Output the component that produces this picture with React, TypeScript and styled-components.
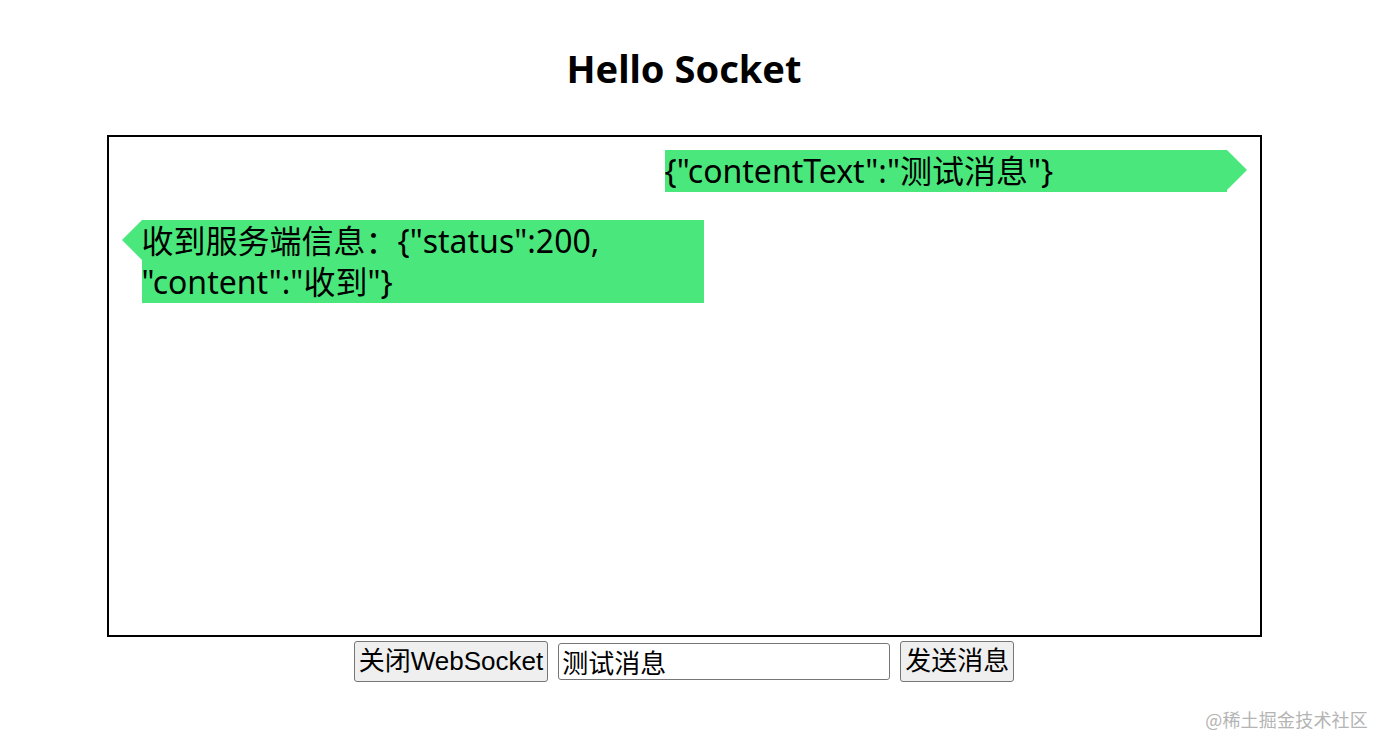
import React, { useState } from 'react';
import styled, { createGlobalStyle } from 'styled-components';

const GlobalStyle = createGlobalStyle`
  html, body {
    margin: 0;
    padding: 0;
    background: #ffffff;
  }
  body {
    font-family: "Noto Sans", "Noto Sans CJK SC", sans-serif;
    color: #000;
  }
`;

const BUBBLE_GREEN = '#4ae87c';

const Page = styled.div`
  width: 1368px;
  min-height: 752px;
  padding-top: 44px;
  box-sizing: border-box;
`;

const Title = styled.h1`
  margin: 0 0 43px;
  text-align: center;
  font-size: 38px;
  line-height: 48px;
  font-weight: 700;
`;

const Board = styled.div`
  width: 1155px;
  height: 502px;
  margin: 0 auto;
  border: 2px solid #000;
  box-sizing: border-box;
  padding: 13px 33px;
  display: flex;
  flex-direction: column;
  gap: 28px;
`;

const Bubble = styled.div<{ $side: 'left' | 'right' }>`
  position: relative;
  width: 562px;
  align-self: ${p => (p.$side === 'right' ? 'flex-end' : 'flex-start')};
  background: ${BUBBLE_GREEN};
  font-size: 32px;
  line-height: 41.5px;
  word-break: break-word;

  &::after {
    content: '';
    position: absolute;
    top: 0;
    ${p => (p.$side === 'right' ? 'left: 100%;' : 'right: 100%;')}
    border-top: 20px solid transparent;
    border-bottom: 20px solid transparent;
    ${p =>
      p.$side === 'right'
        ? `border-left: 20px solid ${BUBBLE_GREEN};`
        : `border-right: 20px solid ${BUBBLE_GREEN};`}
  }
`;

const Controls = styled.div`
  display: flex;
  justify-content: center;
  align-items: center;
  gap: 10px;
  margin-top: 4px;
`;

const Button = styled.button`
  font-family: "Liberation Sans", "Noto Sans CJK SC", sans-serif;
  font-size: 26px;
  line-height: 37px;
  height: 41px;
  padding: 0 4px;
  background: #efefef;
  color: #000;
  border: 1px solid #767676;
  border-radius: 3px;
  cursor: pointer;
`;

const MessageInput = styled.input`
  font-family: "Liberation Sans", "Noto Sans CJK SC", sans-serif;
  font-size: 26px;
  width: 332px;
  height: 37px;
  box-sizing: border-box;
  padding: 0 3px;
  border: 1px solid #767676;
  border-radius: 3px;
  color: #000;
`;

const Watermark = styled.div`
  position: absolute;
  right: 22px;
  bottom: 20px;
  font-family: "Noto Sans CJK SC", sans-serif;
  font-size: 18px;
  color: #b4b4b4;
  letter-spacing: 0.2px;
`;

type Message = { id: number; side: 'left' | 'right'; text: string };

const initialMessages: Message[] = [
  { id: 1, side: 'right', text: '{"contentText":"测试消息"}' },
  { id: 2, side: 'left', text: '收到服务端信息：{"status":200, "content":"收到"}' },
];

const App: React.FC = () => {
  const [messages] = useState<Message[]>(initialMessages);
  const [draft, setDraft] = useState('测试消息');

  return (
    <>
      <GlobalStyle />
      <Page>
        <Title>Hello Socket</Title>
        <Board>
          {messages.map(m => (
            <Bubble key={m.id} $side={m.side}>
              {m.text}
            </Bubble>
          ))}
        </Board>
        <Controls>
          <Button>关闭WebSocket</Button>
          <MessageInput value={draft} onChange={e => setDraft(e.target.value)} />
          <Button>发送消息</Button>
        </Controls>
      </Page>
      <Watermark>@稀土掘金技术社区</Watermark>
    </>
  );
};

export default App;
